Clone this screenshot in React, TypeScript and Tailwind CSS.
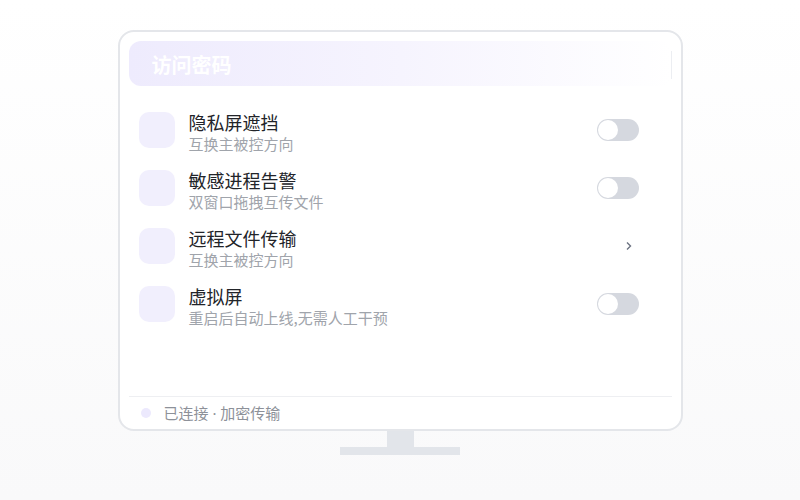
import React from "react";

const rows = [
  { title: "隐私屏遮挡", sub: "互换主被控方向", kind: "toggle" },
  { title: "敏感进程告警", sub: "双窗口拖拽互传文件", kind: "toggle" },
  { title: "远程文件传输", sub: "互换主被控方向", kind: "chevron" },
  { title: "虚拟屏", sub: "重启后自动上线,无需人工干预", kind: "toggle" },
];

function Toggle() {
  return (
    <div className="w-[42px] h-[22px] rounded-full bg-[#d5d8df] p-[1px] flex items-center">
      <div className="w-[20px] h-[20px] rounded-full bg-white" />
    </div>
  );
}

export default function App() {
  return (
    <div
      className="w-[800px] h-[500px] bg-gradient-to-b from-white to-[#f9f9fa] flex flex-col items-center pt-[30px]"
      style={{ fontFamily: '"Noto Sans CJK SC", "Noto Sans", sans-serif' }}
    >
      <div className="w-[565px] h-[401px] border-2 border-[#e4e6ea] rounded-[16px] bg-white flex flex-col px-[9px] pt-[9px]">
        <div className="h-[45px] rounded-[12px] bg-gradient-to-r from-[#eeebfd] via-[#f6f4fe] to-white flex items-center pl-[23px] pt-[2px]">
          <span className="text-white text-[20px] font-bold leading-none">访问密码</span>
          <div className="ml-auto w-[1px] h-[28px] bg-[#eceef2]" />
        </div>
        <div className="flex-1 flex flex-col gap-[22px] pt-[26px] pl-[10px] pr-[33px]">
          {rows.map((r) => (
            <div key={r.title} className="flex items-center h-[36px]">
              <div className="w-[36px] h-[36px] rounded-[10px] bg-[#f1effd] shrink-0" />
              <div className="ml-[14px] flex flex-col pt-[4px]">
                <div className="text-[18px] leading-[24px] text-[#222429]">{r.title}</div>
                <div className="text-[15px] leading-[20px] text-[#a0a4ab]">{r.sub}</div>
              </div>
              <div className="ml-auto flex items-center">
                {r.kind === "toggle" ? (
                  <Toggle />
                ) : (
                  <div className="w-[42px] flex justify-end pr-[7px]">
                    <svg width="6" height="10" viewBox="0 0 6 10">
                      <path d="M1 1.5 L4.5 5 L1 8.5" fill="none" stroke="#6b7280" strokeWidth="1.4" />
                    </svg>
                  </div>
                )}
              </div>
            </div>
          ))}
        </div>
        <div className="h-[33px] border-t border-[#eeeff2] flex items-center pl-[12px]">
          <div className="w-[10px] h-[10px] rounded-full bg-[#ece9fd]" />
          <span
            className="ml-[13px] text-[15px] text-[#8d9199]"
            style={{ fontFamily: '"Noto Sans", "Noto Sans CJK SC", sans-serif' }}
          >
            已连接 · 加密传输
          </span>
        </div>
      </div>
      <div className="w-[27px] h-[16px] bg-[#e2e5ea]" />
      <div className="w-[120px] h-[8px] bg-[#e2e5ea]" />
    </div>
  );
}
